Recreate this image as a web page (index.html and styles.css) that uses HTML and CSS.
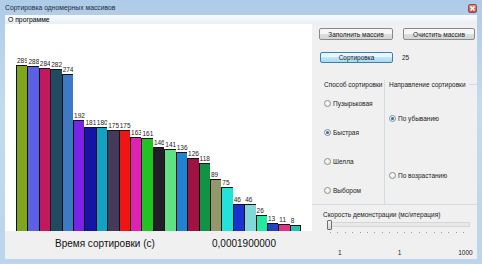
FILE: index.html
```html
<!DOCTYPE html>
<html lang="ru">
<head>
  <meta charset="UTF-8" />
  <title>Сортировка одномерных массивов</title>
  <link rel="stylesheet" href="styles.css">
</head>
<body>
  <div class="window">
    <div class="titlebar">
      <span class="title">Сортировка одномерных массивов</span>
      <span class="close">
        <svg width="9" height="9" viewBox="0 0 9 9"><path d="M2.5 2.5l4 4M6.5 2.5l-4 4" stroke="#fff" stroke-width="1.4"/></svg>
      </span>
    </div>
    <div class="client">
      <div class="menubar"><span class="menu-item">О программе</span></div>
      <div class="main">
        <div class="left">
          <div class="chart"><div id="bars" class="bars"></div></div>
          <div class="time-row">
            <span class="time-label">Время сортировки (с)</span>
            <span class="time-value">0,0001900000</span>
          </div>
        </div>

        <div class="panel">
          <div class="btn-row">
            <div class="btn">Заполнить массив</div>
            <div class="btn btn-narrow">Очистить массив</div>
          </div>
          <div class="sort-row">
            <div class="btn btn-default">Сортировка</div>
            <span class="count">25</span>
          </div>

          <div class="groups">
            <div class="group group-method">
              <div class="group-head">Способ сортировки</div>
              <div class="radio first"><span class="dot"></span>Пузырьковая</div>
              <div class="radio"><span class="dot checked"></span>Быстрая</div>
              <div class="radio"><span class="dot"></span>Шелла</div>
              <div class="radio"><span class="dot"></span>Выбором</div>
            </div>
            <div class="group group-dir">
              <div class="group-head">Направление сортировки</div>
              <div class="radio first"><span class="dot checked"></span>По убыванию</div>
              <div class="radio second"><span class="dot"></span>По возрастанию</div>
            </div>
          </div>

          <div class="speed-label">Скорость демонстрации (мс/итерация)</div>
          <div class="track-wrap">
            <div class="track"></div>
            <div class="thumb"></div>
          </div>
          <div class="ticks"></div>
          <div class="scale">
            <span class="scale-min">1</span>
            <span class="scale-cur">1</span>
            <span class="scale-max">1000</span>
          </div>
        </div>
      </div>
    </div>
  </div>

  <script>
    var values = [289, 288, 284, 282, 274, 192, 181, 180, 175, 175, 163, 161, 146,
                  141, 136, 126, 118, 89, 75, 46, 46, 26, 13, 11, 8];
    var colors = ['#7fa51c', '#5c60e4', '#c2185e', '#1f4a62', '#3d7ac6', '#7a22e6',
                  '#1414a6', '#14a2c2', '#463a5a', '#f01414', '#e022b4', '#22c222',
                  '#211d29', '#5fe284', '#2282d2', '#a01242', '#129244', '#92986a',
                  '#22e2da', '#1a32d0', '#82d8d8', '#22e8a2', '#2242c2', '#e03282',
                  '#22c2b2'];

    var box = document.getElementById('bars');
    values.forEach(function (v, i) {
      var col = document.createElement('div');
      col.className = 'col';
      col.innerHTML = '<span class="val">' + v + '</span>' +
        '<div class="bar" style="height:' + Math.round(v * 165 / 289) + 'px;background:' + colors[i] + '"></div>';
      box.appendChild(col);
    });
  </script>
</body>
</html>
```

FILE: styles.css
```css
body { margin: 0; font-family: "Liberation Sans", Arial, sans-serif; color: #000; }
.window { width: 482px; height: 264px; display: flex; flex-direction: column; background: linear-gradient(#aecbe8, #c4daef 40%, #bcd4ec); box-sizing: border-box; }

/* Title bar */
.titlebar { height: 15px; display: flex; align-items: center; justify-content: space-between; padding: 0 5px 0 5px; flex-shrink: 0; }
.title { font-size: 6.8px; color: #1e2a36; }
.close { width: 9px; height: 9px; border-radius: 2px; background: linear-gradient(#dc9088, #c4564c); border: 1px solid #9a4a44; box-sizing: border-box; display: flex; align-items: center; justify-content: center; margin-top: 1px; }
.close svg { display: block; margin: -1px; }

.client { flex: 1; margin: 0 5px 5px 5px; display: flex; flex-direction: column; background: #f0f0f0; min-height: 0; }
.menubar { height: 9px; flex-shrink: 0; background: linear-gradient(#fafbfd, #e9eef6); display: flex; align-items: center; padding-left: 3px; }
.menu-item { font-size: 6.8px; }

.main { flex: 1; display: flex; min-height: 0; }

/* Chart */
.left { width: 307px; display: flex; flex-direction: column; }
.chart { height: 207px; background: #fff; display: flex; align-items: flex-end; }
.bars { width: 285px; height: 100%; margin-left: 11px; display: flex; align-items: flex-end; }
.col { flex: 1; display: flex; flex-direction: column; align-items: flex-start; min-width: 0; }
.val { font-size: 6.5px; line-height: 7px; background: #fff; padding: 0 1px 1px 1px; white-space: nowrap; color: #222; }
.bar { align-self: stretch; border-top: 1px solid #111; border-left: 1px solid #111; }
.col:last-child .bar { border-right: 1px solid #111; }

.time-row { flex: 1; display: flex; align-items: center; padding-left: 50px; font-size: 10px; color: #111; padding-bottom: 3px; }
.time-label { width: 157px; }

/* Right panel */
.panel { flex: 1; display: flex; flex-direction: column; font-size: 6.5px; color: #222; }
.btn-row { display: flex; gap: 10px; padding-left: 7px; margin-top: 4px; }
.btn { width: 74px; height: 12px; box-sizing: border-box; border: 1px solid #8a8a8a; border-radius: 2px; background: linear-gradient(#f6f6f6 45%, #dedede 50%, #d6d6d6); display: flex; align-items: center; justify-content: center; }
.btn-narrow { width: 72px; }
.sort-row { display: flex; align-items: center; gap: 9px; padding-left: 8px; margin-top: 12px; }
.btn-default { width: 73px; height: 11px; border-color: #3c7fb1; background: linear-gradient(#eaf6fd 45%, #c4e4f7 50%, #a9d9f5); }

.groups { display: flex; margin-top: 17px; height: 125px; border-bottom: 1px solid #d4dce3; box-sizing: border-box; }
.group { display: flex; flex-direction: column; }
.group-method { width: 73px; border-right: 1px solid #d4dce3; padding-left: 12px; box-sizing: border-box; }
.group-dir { flex: 1; padding-left: 4px; }
.group-head { height: 8px; display: flex; align-items: center; gap: 3px; white-space: nowrap; }
.group-head::after { content: ""; flex: 1; border-top: 1px solid #d4dce3; }
.radio { height: 8px; display: flex; align-items: center; gap: 2px; margin-top: 21px; white-space: nowrap; }
.group-method .radio.first { margin-top: 11px; }
.group-dir .radio.first { margin-top: 26px; }
.group-dir .radio.second { margin-top: 49px; }
.dot { width: 7px; height: 7px; border-radius: 50%; border: 1px solid #8e8f8f; box-sizing: border-box; background: radial-gradient(circle at 40% 40%, #ffffff, #e0e0e0); display: flex; align-items: center; justify-content: center; }
.dot.checked::after { content: ""; width: 3px; height: 3px; border-radius: 50%; background: #1f6fc8; }

.speed-label { margin-top: 5px; height: 8px; display: flex; align-items: center; padding-left: 11px; }
.track-wrap { margin: 1px 0 0 15px; width: 143px; height: 11px; display: flex; align-items: center; }
.track { flex: 1; height: 5px; border: 1px solid #d6d6d6; background: #e7eaea; box-sizing: border-box; margin-left: 1px; }
.thumb { order: -1; width: 5px; height: 10px; margin-right: -5px; position: relative; z-index: 1; border: 1px solid #707070; border-radius: 1px; box-sizing: border-box; background: linear-gradient(#f4f4f4, #d8d8d8); }
.ticks { margin: 2px 0 0 18px; width: 141px; height: 1px; background: repeating-linear-gradient(90deg, #9a9a9a 0 1px, transparent 1px 7.4px); }
.scale { margin-top: 15px; height: 8px; display: flex; align-items: center; }
.scale-min { margin-left: 26px; }
.scale-cur { margin-left: 56px; }
.scale-max { margin-left: 57px; }
```
